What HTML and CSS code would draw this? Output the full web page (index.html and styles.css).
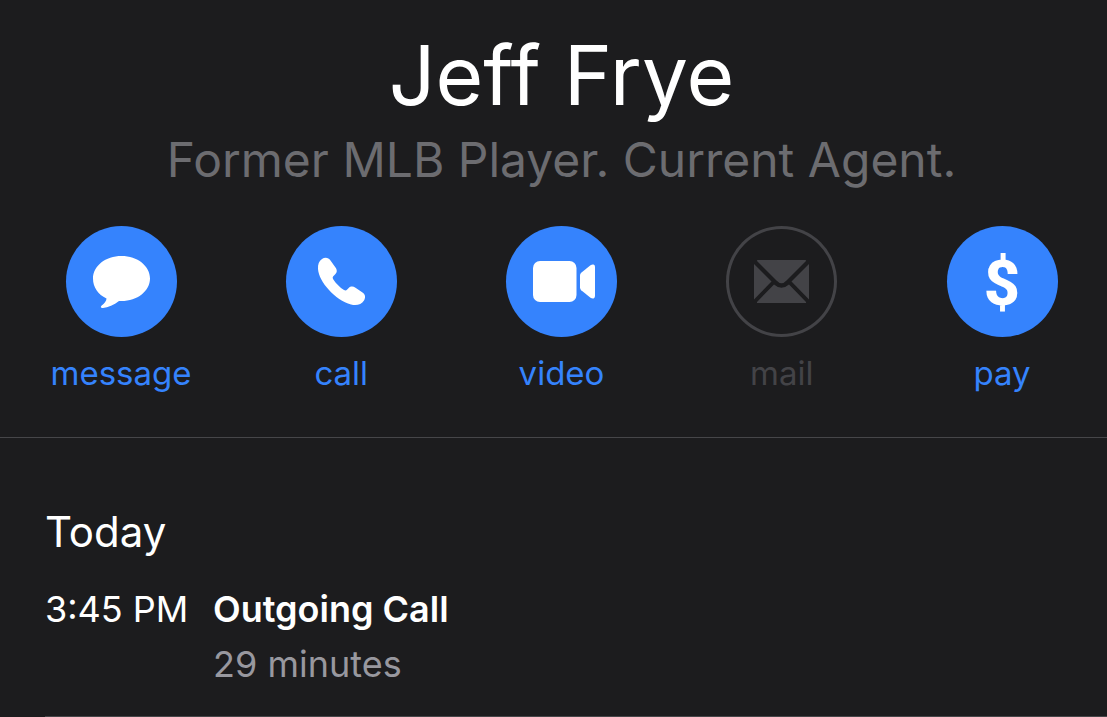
FILE: index.html
```html
<!DOCTYPE html>
<html lang="en">
<head>
    <meta charset="UTF-8">
    <meta name="viewport" content="width=device-width, initial-scale=1">
    <title>Jeff Frye</title>
    <link rel="stylesheet" href="styles.css">
</head>
<body>
<header class="contact">
    <h1 class="name">Jeff Frye</h1>
    <p class="job">Former MLB Player. Current Agent.</p>
    <div class="actions">
        <button type="button" class="action">
            <span class="circle">
                <svg width="111" height="111" viewBox="0 0 111 111" aria-hidden="true">
                    <path d="M55.500 30C71.500 30 84 40 84 52.500S71.500 75 55.500 75L53 75C48 79 42 81.500 37 82C34.500 82 34.300 80.500 36 79.200C38.500 77.300 40.500 75 40.500 72.500C32 68.500 27 61 27 52.500C27 40 39.500 30 55.500 30Z"/>
                </svg>
            </span>
            <span class="label">message</span>
        </button>
        <button type="button" class="action">
            <span class="circle">
                <svg width="111" height="111" viewBox="0 0 111 111" aria-hidden="true">
                    <path d="M36 33C39 31 42.500 31.500 44.500 34.500L49.500 41.500C51.500 44.500 51 46.500 49 48.500L47.500 50C46.500 51 46.500 52 47.200 53.200C50 57.500 54 61.500 58 64C59.200 64.700 60.200 64.600 61.200 63.600L62.700 62C64.500 60.200 67 60 69.500 61.700L76.500 66.500C79.500 68.500 79.700 71.500 78 74.500C75.500 78.500 70.500 80 65 78.500C57 76.500 49 70.500 43 64C36.500 57 32.500 49.500 32 43C31.700 38.500 33 35 36 33Z"/>
                </svg>
            </span>
            <span class="label">call</span>
        </button>
        <button type="button" class="action">
            <span class="circle">
                <svg width="111" height="111" viewBox="0 0 111 111" aria-hidden="true">
                    <rect x="27" y="35" width="43.500" height="41" rx="7"/>
                    <path d="M74 49.500Q74 48 75.200 46.800L84.500 39.300Q86 38.300 87.500 38.600Q89 39 89 41V70Q89 72 87.500 72.400Q86 72.700 84.500 71.700L75.200 64.200Q74 63 74 61.500Z"/>
                </svg>
            </span>
            <span class="label">video</span>
        </button>
        <button type="button" class="action" disabled>
            <span class="circle">
                <svg width="111" height="111" viewBox="0 0 111 111" aria-hidden="true">
                    <path d="M32 34H79Q80.500 34 80 35L60.500 54.500Q55.500 60 50.500 54.500L31 35Q30.500 34 32 34Z"/>
                    <path d="M28 38L45.500 55.500L28 73.500Z"/>
                    <path d="M83 38L65.500 55.500L83 73.500Z"/>
                    <path d="M32 77Q30.500 77 31 76L48 58.500Q55.500 65 63 58.500L80 76Q80.500 77 79 77Z"/>
                </svg>
            </span>
            <span class="label">mail</span>
        </button>
        <button type="button" class="action">
            <span class="circle dollar" aria-hidden="true">$</span>
            <span class="label">pay</span>
        </button>
    </div>
</header>
<main class="history">
    <h2 class="day">Today</h2>
    <div class="call">
        <time class="time" datetime="15:45">3:45 PM</time>
        <div class="details">
            <p class="type">Outgoing Call</p>
            <p class="duration">29 minutes</p>
        </div>
    </div>
</main>
</body>
</html>
```
FILE: styles.css
```css
* {
    margin: 0;
    padding: 0;
    box-sizing: border-box;
}

body {
    background: #1c1c1e;
    color: #fff;
    font-family: Inter, "Liberation Sans", sans-serif;
}

.contact {
    padding: 22px 25px 42px 41px;
    border-bottom: 1px solid #464649;
    text-align: center;
}

.name {
    font-size: 82px;
    font-weight: 400;
    line-height: 108px;
}

.job {
    color: #6c6c70;
    font-size: 48px;
    line-height: 60px;
    white-space: nowrap;
}

.actions {
    display: flex;
    justify-content: space-between;
    margin-top: 36px;
}

.action {
    display: flex;
    flex-direction: column;
    align-items: center;
    width: 160px;
    border: none;
    background: none;
    color: #3583fd;
    font-family: inherit;
    cursor: pointer;
}

.circle {
    display: block;
    width: 111px;
    height: 111px;
    border-radius: 50%;
    background: #3583fd;
}

.circle svg {
    display: block;
    fill: #fff;
}

.dollar {
    color: #fff;
    font-family: Roboto, sans-serif;
    font-size: 63px;
    font-weight: 800;
    line-height: 116px;
}

.label {
    margin-top: 14px;
    font-size: 33px;
    line-height: 44px;
}

.action:disabled {
    color: #434347;
    cursor: default;
}

.action:disabled .circle {
    background: none;
    box-shadow: inset 0 0 0 3px #434347;
}

.action:disabled svg {
    fill: #434347;
}

.history {
    padding: 66px 0 0 45px;
}

.day {
    font-size: 42px;
    font-weight: 400;
    line-height: 56px;
}

.call {
    display: grid;
    grid-template-columns: 168px 1fr;
    padding: 22px 0 24px;
    border-bottom: 1px solid #464649;
    font-size: 36px;
    line-height: 55px;
}

.type {
    font-weight: 600;
}

.duration {
    color: #98989f;
}
```
